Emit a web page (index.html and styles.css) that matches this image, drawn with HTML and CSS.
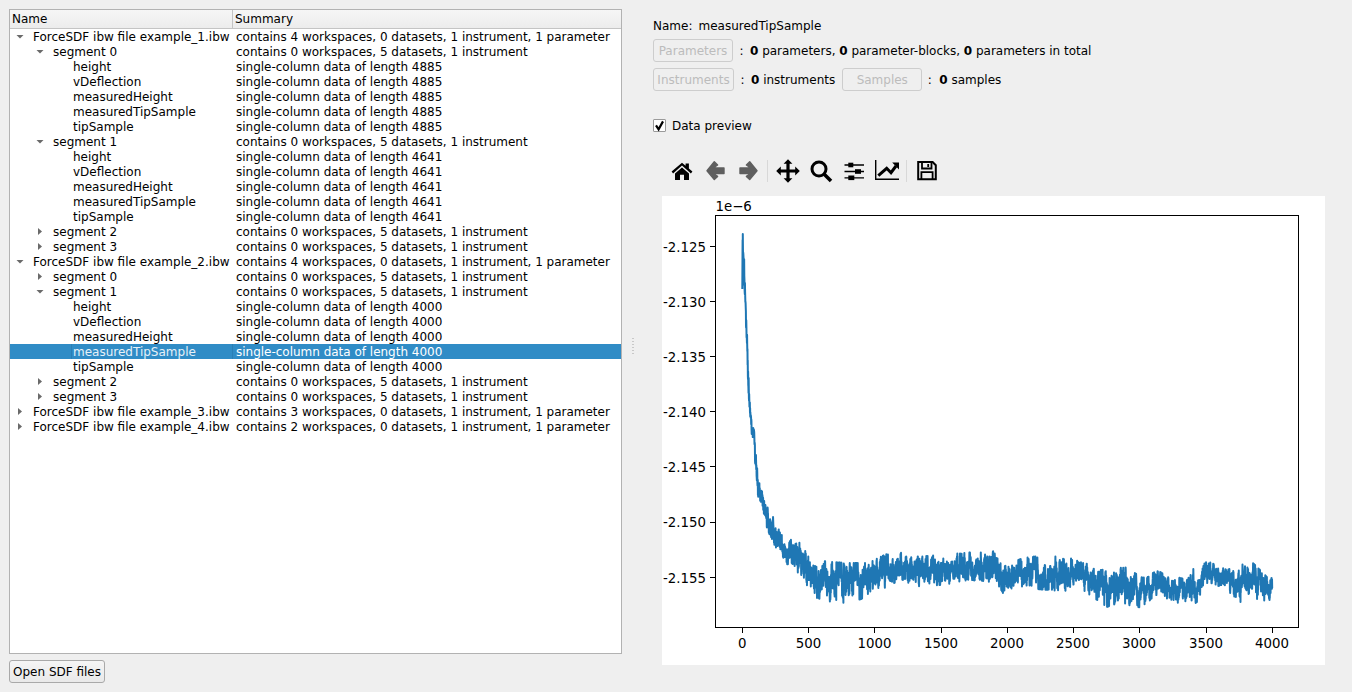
FILE: index.html
```html
<!DOCTYPE html>
<html lang="en">
<head>
<meta charset="utf-8">
<title>SDF browser</title>
<link rel="stylesheet" href="styles.css">
</head>
<body>
<div class="app">
  <section class="left">
    <div class="tree">
      <div class="tree-head"><div class="head-name">Name</div><div class="head-summary">Summary</div></div>
      <div class="row"><div class="name l0"><i class="arrow open"></i>ForceSDF ibw file example_1.ibw</div><div class="sum">contains 4 workspaces, 0 datasets, 1 instrument, 1 parameter</div></div>
      <div class="row"><div class="name l1"><i class="arrow open"></i>segment 0</div><div class="sum">contains 0 workspaces, 5 datasets, 1 instrument</div></div>
      <div class="row"><div class="name l2">height</div><div class="sum">single-column data of length 4885</div></div>
      <div class="row"><div class="name l2">vDeflection</div><div class="sum">single-column data of length 4885</div></div>
      <div class="row"><div class="name l2">measuredHeight</div><div class="sum">single-column data of length 4885</div></div>
      <div class="row"><div class="name l2">measuredTipSample</div><div class="sum">single-column data of length 4885</div></div>
      <div class="row"><div class="name l2">tipSample</div><div class="sum">single-column data of length 4885</div></div>
      <div class="row"><div class="name l1"><i class="arrow open"></i>segment 1</div><div class="sum">contains 0 workspaces, 5 datasets, 1 instrument</div></div>
      <div class="row"><div class="name l2">height</div><div class="sum">single-column data of length 4641</div></div>
      <div class="row"><div class="name l2">vDeflection</div><div class="sum">single-column data of length 4641</div></div>
      <div class="row"><div class="name l2">measuredHeight</div><div class="sum">single-column data of length 4641</div></div>
      <div class="row"><div class="name l2">measuredTipSample</div><div class="sum">single-column data of length 4641</div></div>
      <div class="row"><div class="name l2">tipSample</div><div class="sum">single-column data of length 4641</div></div>
      <div class="row"><div class="name l1"><i class="arrow"></i>segment 2</div><div class="sum">contains 0 workspaces, 5 datasets, 1 instrument</div></div>
      <div class="row"><div class="name l1"><i class="arrow"></i>segment 3</div><div class="sum">contains 0 workspaces, 5 datasets, 1 instrument</div></div>
      <div class="row"><div class="name l0"><i class="arrow open"></i>ForceSDF ibw file example_2.ibw</div><div class="sum">contains 4 workspaces, 0 datasets, 1 instrument, 1 parameter</div></div>
      <div class="row"><div class="name l1"><i class="arrow"></i>segment 0</div><div class="sum">contains 0 workspaces, 5 datasets, 1 instrument</div></div>
      <div class="row"><div class="name l1"><i class="arrow open"></i>segment 1</div><div class="sum">contains 0 workspaces, 5 datasets, 1 instrument</div></div>
      <div class="row"><div class="name l2">height</div><div class="sum">single-column data of length 4000</div></div>
      <div class="row"><div class="name l2">vDeflection</div><div class="sum">single-column data of length 4000</div></div>
      <div class="row"><div class="name l2">measuredHeight</div><div class="sum">single-column data of length 4000</div></div>
      <div class="row selected"><div class="name l2"><span class="focus">measuredTipSample</span></div><div class="sum">single-column data of length 4000</div></div>
      <div class="row"><div class="name l2">tipSample</div><div class="sum">single-column data of length 4000</div></div>
      <div class="row"><div class="name l1"><i class="arrow"></i>segment 2</div><div class="sum">contains 0 workspaces, 5 datasets, 1 instrument</div></div>
      <div class="row"><div class="name l1"><i class="arrow"></i>segment 3</div><div class="sum">contains 0 workspaces, 5 datasets, 1 instrument</div></div>
      <div class="row"><div class="name l0"><i class="arrow"></i>ForceSDF ibw file example_3.ibw</div><div class="sum">contains 3 workspaces, 0 datasets, 1 instrument, 1 parameter</div></div>
      <div class="row"><div class="name l0"><i class="arrow"></i>ForceSDF ibw file example_4.ibw</div><div class="sum">contains 2 workspaces, 0 datasets, 1 instrument, 1 parameter</div></div>
    </div>
    <button class="btn open-btn" type="button">Open SDF files</button>
  </section>

  <div class="splitter"><div class="grip"></div></div>

  <section class="right">
    <div class="name-line"><span>Name:</span><span>measuredTipSample</span></div>
    <div class="info-line">
      <button class="btn off w-params" type="button" disabled>Parameters</button>
      <span class="colon">:</span>
      <span class="tight"><b>0</b> parameters, <b>0</b> parameter-blocks, <b>0</b> parameters in total</span>
    </div>
    <div class="info-line second">
      <button class="btn off w-instr" type="button" disabled>Instruments</button>
      <span class="colon">:</span>
      <span><b>0</b> instruments</span>
      <button class="btn off w-samples" type="button" disabled>Samples</button>
      <span class="colon">:</span>
      <span><b>0</b> samples</span>
    </div>
    <label class="check-line">
      <span class="check"><svg viewBox="0 0 13 13" width="13" height="13"><path d="M3 6.3 L5.6 10.4 L10 2.4" fill="none" stroke="#000" stroke-width="2.2"/></svg></span>
      Data preview
    </label>

    <div class="toolbar">
      <span class="tool"><svg viewBox="0 0 24 24" width="24" height="24"><path fill="#000" d="M1.6 12.6 12 3.8l3.6 3V4.6h3.3v5l3.5 3-1.5 1.8L12 6.6 3.1 14.4Z"/><path fill="#000" d="M5 14.6 12 8.5l7 6.1V21h-5v-5.2h-4V21H5Z"/></svg></span>
      <span class="tool"><svg viewBox="0 0 24 24" width="24" height="24"><path class="nav-arrow" d="M4 11.7 11.3 2.8 14.6 6 10.4 8.9H21V14.5H10.4L14.6 17.4 11.3 20.6 Z"/></svg></span>
      <span class="tool"><svg viewBox="0 0 24 24" width="24" height="24"><path class="nav-arrow" d="M21 11.7 13.7 2.8 10.4 6 14.6 8.9H4V14.5H14.6L10.4 17.4 13.7 20.6 Z"/></svg></span>
      <span class="tool-sep"></span>
      <span class="tool"><svg viewBox="0 0 24 24" width="24" height="24"><path fill="#000" d="M12 0.2 16.4 4.8H13.6V10.4H19.2V7.6L23.8 12 19.2 16.4V13.6H13.6V19.2H16.4L12 23.8 7.6 19.2H10.4V13.6H4.8V16.4L0.2 12 4.8 7.6V10.4H10.4V4.8H7.6Z"/></svg></span>
      <span class="tool"><svg viewBox="0 0 24 24" width="24" height="24"><circle cx="10" cy="10" r="7" fill="none" stroke="#000" stroke-width="3"/><path d="M15 15l7 7" stroke="#000" stroke-width="3.6" fill="none"/></svg></span>
      <span class="tool"><svg viewBox="0 0 24 24" width="24" height="24"><path d="M2.5 6h19.5M2.5 12.5h19.5M2.5 18.8h19.5" stroke="#000" stroke-width="1.3" fill="none"/><rect x="6.3" y="3.7" width="5" height="4.6" fill="#000"/><rect x="13" y="10.2" width="6" height="4.6" fill="#000"/><rect x="6.3" y="16.5" width="6" height="4.6" fill="#000"/></svg></span>
      <span class="tool"><svg viewBox="0 0 24 24" width="24" height="24"><path d="M0.7 1V20.3H24" stroke="#000" stroke-width="1.4" fill="none"/><path d="M3.3 16.7 11.7 9.3 16 13.7 21 7" stroke="#000" stroke-width="3" fill="none"/><path d="M17.2 3.4H24V10.5Z" fill="#000"/></svg></span>
      <span class="tool-sep"></span>
      <span class="tool"><svg viewBox="0 0 24 24" width="24" height="24"><path d="M3.2 3H17.6L20.8 6.2V20.2H3.2Z" fill="none" stroke="#000" stroke-width="2"/><path d="M7 3.5V9.5H16.5V3.5M13.2 5V8" fill="none" stroke="#000" stroke-width="1.8"/><path d="M6.4 20V13.2H17.6V20" fill="none" stroke="#000" stroke-width="1.8"/></svg></span>
    </div>

    <div class="plot">
      <svg class="plot-svg" viewBox="662 196 663 469" width="663" height="469">
        <polyline id="trace" class="trace" points=""></polyline>
        <rect class="axes" x="715.5" y="215.5" width="583" height="412"></rect>
        <g class="ticks">
          <path d="M710 246.5h5M710 301.5h5M710 356.5h5M710 411.5h5M710 466.5h5M710 522.5h5M710 577.5h5"/>
          <path d="M742.5 628v5M808.5 628v5M874.5 628v5M941.5 628v5M1007.5 628v5M1073.5 628v5M1139.5 628v5M1206.5 628v5M1272.5 628v5"/>
        </g>
        <g class="ylabels">
          <text x="706" y="251.5">-2.125</text>
          <text x="706" y="306.5">-2.130</text>
          <text x="706" y="361.5">-2.135</text>
          <text x="706" y="416.5">-2.140</text>
          <text x="706" y="471.5">-2.145</text>
          <text x="706" y="527">-2.150</text>
          <text x="706" y="582.5">-2.155</text>
        </g>
        <g class="xlabels">
          <text x="742.3" y="648">0</text>
          <text x="808.5" y="648">500</text>
          <text x="874.5" y="648">1000</text>
          <text x="941" y="648">1500</text>
          <text x="1007" y="648">2000</text>
          <text x="1073" y="648">2500</text>
          <text x="1139" y="648">3000</text>
          <text x="1206" y="648">3500</text>
          <text x="1272" y="648">4000</text>
        </g>
        <text class="offset" x="715.5" y="211">1e−6</text>
      </svg>
    </div>
  </section>
</div>
<script src="plot.js"></script>
</body>
</html>
```
FILE: styles.css
```css
* { box-sizing: border-box; }
html, body { margin: 0; height: 100%; }
body {
  background: #efefef;
  color: #000;
  font-family: "DejaVu Sans", sans-serif;
  font-size: 12px;
  overflow: hidden;
}
.app { display: flex; height: 692px; }

.left { width: 622px; padding: 9px 0 0 9px; display: flex; flex-direction: column; align-items: flex-start; flex: none; }
.tree { width: 613px; height: 645px; background: #fff; border: 1px solid #b2b2b2; }
.tree-head { display: flex; height: 19px; background: linear-gradient(#f6f6f6, #ececec); border-bottom: 1px solid #c4c4c4; line-height: 19px; }
.head-name { width: 223px; padding-left: 2px; border-right: 1px solid #c4c4c4; }
.head-summary { padding-left: 2px; }
.row { display: flex; height: 15px; line-height: 17px; white-space: nowrap; }
.name { width: 223px; display: flex; align-items: flex-start; flex: none; }
.l0 { padding-left: 3px; }
.l1 { padding-left: 23px; }
.l2 { padding-left: 63px; }
.sum { padding-left: 3px; letter-spacing: -0.012px; }
.tight { letter-spacing: -0.012px; }
.arrow { width: 14px; height: 15px; margin-right: 6px; display: flex; align-items: center; justify-content: center; }
.arrow::before {
  content: "";
  width: 4px;
  height: 7px;
  background: #6a6a6a;
  clip-path: polygon(0 0, 100% 50%, 0 100%);
}
.arrow.open::before {
  width: 8px;
  height: 4px;
  clip-path: polygon(0 0, 100% 0, 50% 100%);
}
.selected { background: #308cc6; color: #fff; }
.selected .name { color: #e6f1f8; }
.focus { margin-left: -2px; padding-left: 1px; width: 162px; height: 15px; border-right: 1px solid #2a7fb5; border-left: 1px solid #2a7fb5; }

.btn {
  font: inherit;
  height: 23px;
  padding: 0;
  color: #000;
  background: linear-gradient(#f5f5f5, #e9e9e9);
  border: 1px solid #a9a9a9;
  border-radius: 3px;
}
.open-btn { width: 96px; margin-top: 6px; }
.btn.off { color: #bcbcbc; background: #efefef; border-color: #cdcdcd; }
.w-params { width: 80px; }
.w-instr { width: 81px; }
.w-samples { width: 80px; margin-left: 7px; }

.splitter { width: 22px; flex: none; display: flex; align-items: center; justify-content: center; }
.grip { width: 2px; height: 17px; background: repeating-linear-gradient(#c8c8c8 0 1px, #efefef 1px 3px); }

.right { flex: 1; padding: 19px 0 0 9px; min-width: 0; }
.name-line { display: flex; gap: 6px; height: 15px; line-height: 15px; }
.info-line { display: flex; align-items: center; margin-top: 5px; height: 23px; white-space: nowrap; }
.info-line.second { margin-top: 6px; }
.colon { width: 5px; margin: 0 6px; text-align: center; }
.info-line.second .w-samples + .colon { margin: 0 7px 0 5px; }
.check-line { display: flex; align-items: center; gap: 6px; margin-top: 27px; height: 15px; }
.check { width: 13px; height: 13px; background: #fff; border: 1px solid #9a9a9a; border-radius: 1px; display: block; }
.check svg { display: block; margin: -1px; }

.toolbar { display: flex; align-items: center; margin: 22px 0 0 12px; height: 32px; }
.tool { width: 33px; height: 32px; display: flex; align-items: center; justify-content: center; flex: none; }
.tool-sep { width: 7px; height: 22px; flex: none; background: linear-gradient(#d8d8d8, #d8d8d8) center / 1px 100% no-repeat; }
.nav-arrow { fill: #5f5f5f; stroke: #5f5f5f; stroke-width: 1.4; stroke-linejoin: round; }

.plot { margin: 9px 0 0 9px; width: 663px; height: 469px; background: #fff; }
.plot-svg { display: block; }
.trace { fill: none; stroke: #1f77b4; stroke-width: 2; stroke-linejoin: round; }
.axes { fill: none; stroke: #000; stroke-width: 1; }
.ticks path { stroke: #000; stroke-width: 1; fill: none; }
.plot-svg text { font-family: "DejaVu Sans", sans-serif; font-size: 13.33px; fill: #000; }
.ylabels text { text-anchor: end; }
.xlabels text { text-anchor: middle; }
```
FILE: plot.js
```js
// Rebuilds the 4000-sample measuredTipSample trace: a band (top, bottom in plot pixels)
// following the decay and drift of the signal, with seeded noise inside the band.
(function () {
  var band = [
    [742.3, 233, 289], [743, 233, 262], [744, 252, 285], [746, 310, 335], [748, 350, 385],
    [750, 390, 415], [752, 425, 442], [754, 430, 455], [757, 465, 490], [760, 488, 513],
    [765, 497, 522], [770, 508, 536], [775, 517, 546], [783, 537, 560], [800, 543, 577],
    [813, 560, 597], [843, 563, 605], [867, 563, 597], [900, 548, 580], [913, 557, 588],
    [940, 555, 585], [977, 552, 580], [997, 548, 583], [1003, 567, 593], [1023, 558, 588],
    [1050, 555, 590], [1067, 557, 592], [1083, 563, 590], [1107, 568, 607], [1118, 563, 603],
    [1143, 578, 608], [1153, 570, 597], [1187, 580, 605], [1193, 567, 603], [1200, 578, 603],
    [1205, 560, 587], [1227, 570, 590], [1240, 565, 602], [1253, 563, 600], [1267, 577, 606],
    [1272, 578, 598]
  ];
  var seed = 20240611;
  function rnd() {
    seed = (seed * 1664525 + 1013904223) >>> 0;
    return seed / 4294967296;
  }
  function at(x) {
    for (var i = 1; i < band.length; i++) {
      if (x <= band[i][0]) {
        var a = band[i - 1], b = band[i], t = (x - a[0]) / (b[0] - a[0]);
        return [a[1] + (b[1] - a[1]) * t, a[2] + (b[2] - a[2]) * t];
      }
    }
    return [band[band.length - 1][1], band[band.length - 1][2]];
  }
  var slow = 0, mid = 0, kick = 0;
  var pts = ["742.3,289", "742.6,240", "742.7,285", "742.8,234", "743.1,262"];
  for (var i = 6; i < 4000; i++) {
    var x = 742.3 + i * 0.1325;
    var b = at(x);
    slow = 0.985 * slow + (rnd() - 0.5) * 0.14;
    mid = 0.85 * mid + (rnd() - 0.5) * 0.55;
    kick *= 0.8;
    if (rnd() < 0.018) kick += (rnd() < 0.5 ? -1 : 1) * 1.0;
    var n = Math.max(-1, Math.min(1, slow * 0.5 + mid * 1.1 + kick + (rnd() - 0.5) * 1.1));
    var y = (b[0] + b[1]) / 2 + (b[1] - b[0]) / 2 * n;
    pts.push(x.toFixed(2) + "," + y.toFixed(1));
  }
  document.getElementById("trace").setAttribute("points", pts.join(" "));
})();
```
